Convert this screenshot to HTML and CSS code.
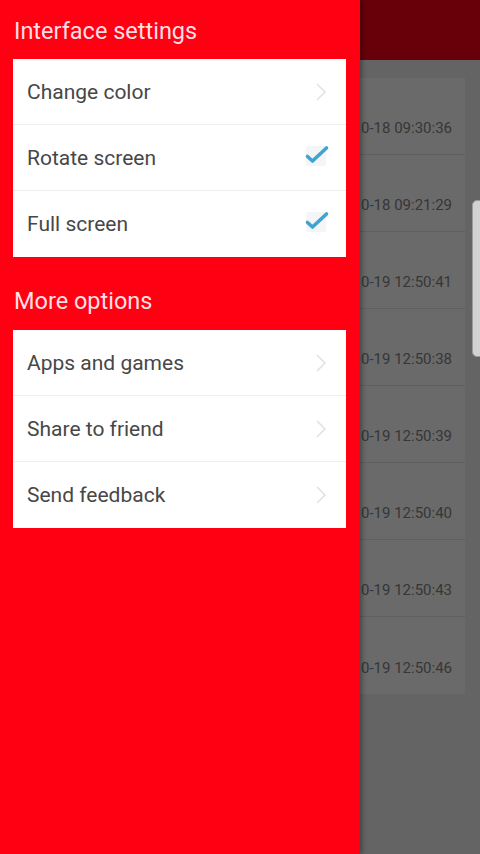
FILE: index.html
```html
<!DOCTYPE html>
<html>
<head>
<meta charset="utf-8">
<link rel="stylesheet" href="styles.css">
</head>
<body>
<div class="app">
  <div class="topbar"></div>
  <div class="content">
    <div class="list">
      <div class="lrow"><span class="ts">2018-10-18 09:30:36</span></div>
      <div class="lrow"><span class="ts">2018-10-18 09:21:29</span></div>
      <div class="lrow"><span class="ts">2018-10-19 12:50:41</span></div>
      <div class="lrow"><span class="ts">2018-10-19 12:50:38</span></div>
      <div class="lrow"><span class="ts">2018-10-19 12:50:39</span></div>
      <div class="lrow"><span class="ts">2018-10-19 12:50:40</span></div>
      <div class="lrow"><span class="ts">2018-10-19 12:50:43</span></div>
      <div class="lrow"><span class="ts">2018-10-19 12:50:46</span></div>
    </div>
  </div>
  <div class="scrollthumb"></div>
</div>

<div class="drawer">
  <div class="section-title">Interface settings</div>
  <div class="card">
    <div class="row"><span class="label">Change color</span>
      <svg class="chev" width="14" height="22" viewBox="0 0 14 22"><path d="M3 3 L11 11 L3 19" fill="none" stroke="#e2e2e2" stroke-width="1.6"/></svg>
    </div>
    <div class="row"><span class="label">Rotate screen</span>
      <svg class="check" width="28" height="28" viewBox="0 0 28 28"><rect x="3" y="5" width="20" height="20" rx="2" fill="#f3f5f6"/><path d="M4.5 15.5 L9.5 20 L23.5 7" fill="none" stroke="#3ea5d3" stroke-width="3.6" stroke-linecap="round" stroke-linejoin="round"/></svg>
    </div>
    <div class="row"><span class="label">Full screen</span>
      <svg class="check" width="28" height="28" viewBox="0 0 28 28"><rect x="3" y="5" width="20" height="20" rx="2" fill="#f3f5f6"/><path d="M4.5 15.5 L9.5 20 L23.5 7" fill="none" stroke="#3ea5d3" stroke-width="3.6" stroke-linecap="round" stroke-linejoin="round"/></svg>
    </div>
  </div>
  <div class="section-title second">More options</div>
  <div class="card">
    <div class="row"><span class="label">Apps and games</span>
      <svg class="chev" width="14" height="22" viewBox="0 0 14 22"><path d="M3 3 L11 11 L3 19" fill="none" stroke="#e2e2e2" stroke-width="1.6"/></svg>
    </div>
    <div class="row"><span class="label">Share to friend</span>
      <svg class="chev" width="14" height="22" viewBox="0 0 14 22"><path d="M3 3 L11 11 L3 19" fill="none" stroke="#e2e2e2" stroke-width="1.6"/></svg>
    </div>
    <div class="row"><span class="label">Send feedback</span>
      <svg class="chev" width="14" height="22" viewBox="0 0 14 22"><path d="M3 3 L11 11 L3 19" fill="none" stroke="#e2e2e2" stroke-width="1.6"/></svg>
    </div>
  </div>
</div>
</body>
</html>
```

FILE: styles.css
```css
html, body {
  margin: 0;
  padding: 0;
}
body {
  width: 480px;
  height: 854px;
  overflow: hidden;
  position: relative;
  font-family: Roboto, "Liberation Sans", sans-serif;
  background: #646464;
}
.app {
  width: 480px;
  height: 854px;
  display: flex;
  flex-direction: column;
  position: relative;
}
.topbar {
  height: 60px;
  background: #68000a;
  flex: none;
}
.content {
  flex: 1;
  padding: 18px 15px 0 200px;
}
.list {
  background: #6a6a6a;
  display: flex;
  flex-direction: column;
}
.lrow {
  height: 77px;
  box-sizing: border-box;
  border-bottom: 1px solid #5f5f5f;
  display: flex;
  align-items: flex-end;
  justify-content: flex-end;
  padding: 0 13px 17px 0;
}
.lrow:last-child {
  border-bottom: none;
}
.ts {
  font-size: 15px;
  color: #363636;
  line-height: 18px;
}
.scrollthumb {
  position: absolute;
  right: -6px;
  top: 200px;
  width: 12px;
  height: 155px;
  background: #d2d2d2;
  border: 1px solid #9a9a9a;
  border-radius: 5px;
}
.drawer {
  position: absolute;
  left: 0;
  top: 0;
  width: 360px;
  height: 854px;
  background: #ff0013;
  box-shadow: 2px 0 5px rgba(0,0,0,0.35);
  padding: 0 14px 0 13px;
  box-sizing: border-box;
  display: flex;
  flex-direction: column;
}
.section-title {
  height: 59px;
  box-sizing: border-box;
  padding: 16px 0 0 1px;
  font-size: 23.5px;
  line-height: 30px;
  color: #ffdfe1;
}
.section-title.second {
  height: 73px;
  padding-top: 29px;
}
.card {
  background: #ffffff;
  display: flex;
  flex-direction: column;
}
.row {
  height: 66px;
  box-sizing: border-box;
  border-bottom: 1px solid #eeeeee;
  display: flex;
  align-items: center;
  justify-content: space-between;
  padding: 0 16px 0 14px;
}
.row:last-child {
  border-bottom: none;
}
.label {
  font-size: 21px;
  color: #474747;
}
.chev {
  margin-right: 2px;
}
.check {
  margin-right: -1px;
  margin-top: -6px;
}
```
